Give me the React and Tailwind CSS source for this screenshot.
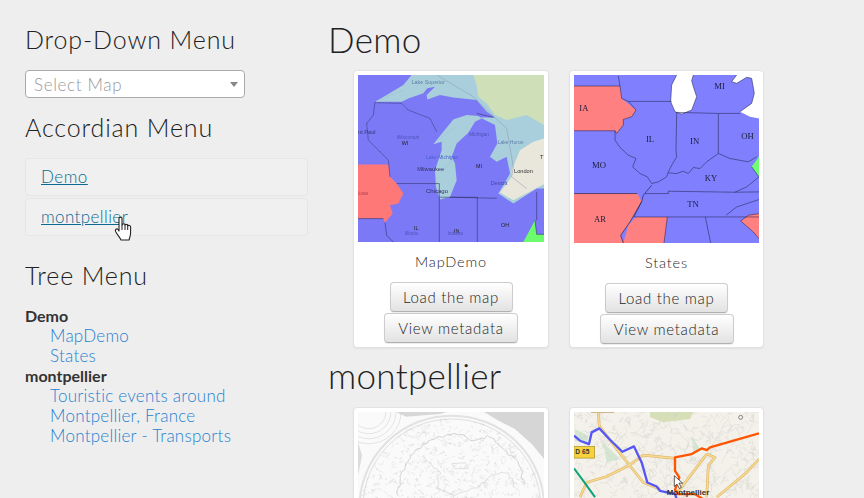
const rnd = (seed) => { let s = seed; return () => (s = (s * 16807) % 2147483647) / 2147483647; };

const roadNet = (() => {
  const r = rnd(77); let d = "";
  for (let i = 0; i < 340; i++) {
    let x = 42 + r() * 555, y = 39 + r() * 260;
    d += `M${x.toFixed(0)} ${y.toFixed(0)}`;
    for (let k = 0; k < 3; k++) { x += (r() - 0.5) * 36; y += (r() - 0.5) * 36; d += `L${x.toFixed(0)} ${y.toFixed(0)}`; }
  }
  return d;
})();

const worldLines = (() => {
  const r = rnd(31); let d = "";
  for (let i = 0; i < 1100; i++) {
    const a = r() * Math.PI * 2, q = Math.sqrt(r()) * 262;
    let x = 335 + Math.cos(a) * q, y = 283 + Math.sin(a) * q;
    d += `M${x.toFixed(0)} ${y.toFixed(0)}`;
    for (let k = 0; k < 3; k++) { x += (r() - 0.5) * 14; y += (r() - 0.5) * 12; d += `L${x.toFixed(0)} ${y.toFixed(0)}`; }
  }
  return d;
})();

const jitter = (pts, seed) => {
  const r = rnd(seed); let d = "";
  pts.forEach(([x, y], i) => {
    if (i === 0) { d += `M${x} ${y}`; return; }
    const [px, py] = pts[i - 1];
    for (let t = 1; t <= 6; t++) {
      const f = t / 6;
      d += `L${(px + (x - px) * f + (r() - 0.5) * 9).toFixed(0)} ${(py + (y - py) * f + (r() - 0.5) * 9).toFixed(0)}`;
    }
  });
  return d;
};
const eurasia = jitter([[175, 250], [185, 190], [215, 130], [270, 85], [340, 62], [400, 85], [440, 72], [490, 110], [530, 150], [548, 215]], 11);
const inner = jitter([[250, 135], [300, 180], [290, 230], [340, 250], [420, 220], [450, 190], [500, 180], [525, 225]], 23);

function MapOne() {
  const lab = { fontFamily: "'Liberation Sans', sans-serif" };
  return (
    <svg viewBox="54 45 558 500" preserveAspectRatio="none" className="block h-full w-full">
      <g style={{ filter: "blur(0.45px)" }}>
        <rect x="54" y="45" width="558" height="500" fill="#7c79f6" />
        <path d="M215 45 L612 45 L612 385 L590 385 L520 430 L475 400 L490 375 L510 340 L500 290 L470 305 L450 290 L472 250 L465 195 L420 172 L465 172 L440 155 L410 120 L340 112 L300 105 L262 118 L260 105 L285 80 L262 85 L250 100 L205 115 L185 125 L105 125 L140 105 L190 75 Z" fill="#a9cfdc" />
        <path d="M340 178 L380 165 L415 168 L425 175 L405 185 L385 218 L350 250 L335 290 L345 310 L350 360 L330 410 L300 418 L288 380 L285 330 L295 300 L305 270 L305 245 L280 252 L310 215 Z" fill="#a9cfdc" />
        <path d="M400 45 L612 45 L612 195 L560 165 L500 180 L465 165 L440 130 L415 110 L410 75 Z" fill="#cfdfb8" />
        <path d="M515 330 L540 270 L580 245 L612 235 L612 372 L520 420 L480 397 L515 350 Z" fill="#e9e6dc" />
        <path d="M54 313 L145 313 L150 350 L170 370 L190 400 L175 430 L150 435 L158 460 L135 487 L130 475 L54 475 Z" fill="#ff7878" />
        <path d="M550 545 L585 480 L590 522 L612 522 L612 545 Z" fill="#6cfb6c" />
        <g fill="none" stroke="#2a2a5a" strokeWidth="1.6">
          <path d="M54 475 L130 475 M170 370 L298 370 L298 545 M298 411 L412 411 L412 545 M330 411 L470 414 M585 480 L590 522 L612 522 M590 395 L590 480" />
          <path d="M135 487 L140 525 L160 545" />
          <path d="M105 125 L110 128 L185 130 L205 150 L270 175 L290 215" strokeDasharray="4 1" />
          <path d="M80 190 L100 165 L105 125 M80 190 L85 240 L115 270 L145 300 L150 350" strokeDasharray="5 1" />
          <path d="M410 160 L460 172" />
        </g>
        <path d="M290 45 L400 110 L440 150 L500 205 L520 320 L515 350 L560 385" fill="none" stroke="#8f9bb0" strokeWidth="1.6" />
        <path d="M190 90 L105 125 M300 235 L350 200 M340 300 L300 340" fill="none" stroke="#97b8cb" strokeWidth="1.2" />
        <g style={lab} fontSize="17">
          <text x="215" y="71" fill="#5f7fa6" fontSize="16">Lake Superior</text>
          <text x="54" y="223" fill="#333a78">nt Paul</text>
          <text x="170" y="237" fill="#4c52b8" fontSize="15" fontStyle="italic">Wisconsin</text>
          <text x="185" y="254" fill="#222" fontSize="16">WI</text>
          <text x="387" y="229" fill="#4c52b8" fontSize="15">Michigan</text>
          <text x="473" y="253" fill="#5f7fa6" fontSize="15">Lake Huron</text>
          <text x="258" y="298" fill="#4a5fd0" fontSize="15">Lake Michigan</text>
          <text x="232" y="332" fill="#2f3060">Milwaukee</text>
          <text x="408" y="322" fill="#222" fontSize="16">MI</text>
          <text x="522" y="337" fill="#333">London</text>
          <text x="600" y="298" fill="#333">T</text>
          <text x="452" y="373" fill="#4348a8">Detroit</text>
          <text x="258" y="397" fill="#2f3060" fontSize="18">Chicago</text>
          <text x="54" y="405" fill="#b04050" fontSize="14">Iowa</text>
          <text x="222" y="510" fill="#222" fontSize="16">IL</text>
          <text x="195" y="525" fill="#4c52b8" fontSize="14">Illinois</text>
          <text x="342" y="519" fill="#222" fontSize="16">IN</text>
          <text x="323" y="525" fill="#4c52b8" fontSize="14">Indiana</text>
          <text x="483" y="499" fill="#222" fontSize="16">OH</text>
        </g>
      </g>
    </svg>
  );
}

function MapTwo() {
  const lab = { fontFamily: "'Liberation Serif', serif" };
  return (
    <svg viewBox="42 45 555 503" preserveAspectRatio="none" className="block h-full w-full">
      <g style={{ filter: "blur(0.3px)" }}>
        <rect x="42" y="45" width="555" height="503" fill="#8080ff" />
        <path d="M350 45 L335 75 L332 125 L345 155 L365 162 L395 150 L410 110 L400 80 L395 62 L400 45 Z" fill="#fff" />
        <path d="M530 45 L515 65 L530 70 L560 52 L575 55 L583 100 L575 130 L540 155 L570 170 L597 175 L597 45 Z" fill="#fff" />
        <path d="M42 78 L180 78 L185 115 L228 150 L215 170 L190 178 L190 195 L170 220 L165 212 L42 212 Z" fill="#ff8080" />
        <path d="M42 400 L232 400 L245 424 L230 450 L210 485 L182 525 L190 548 L42 548 Z" fill="#ff8080" />
        <path d="M228 470 L322 470 L312 548 L190 548 L205 495 Z" fill="#ff8080" />
        <path d="M597 290 L575 320 L597 350 Z" fill="#70ff70" />
        <path d="M597 460 L565 465 L542 482 L580 515 L597 535 Z" fill="#ff8080" />
        <g fill="none" stroke="#20204a" strokeWidth="1.6" strokeLinejoin="round">
          <path d="M42 78 L180 78 L175 48 M180 78 L185 115 L205 124 L228 150 L215 170 L190 178 L190 195 L170 220 L165 212 L42 212" />
          <path d="M205 124 L335 124 M350 157 L348 270 L350 290 L338 310 L325 335 L320 350 L295 365 L275 370 L262 350 L240 340 L218 320 L228 295 L205 285 L180 262 L165 240 L165 212" />
          <path d="M350 157 L475 160 L475 280 L440 305 L420 325 L400 322 L385 340 L370 333 L350 340 L325 338" />
          <path d="M475 160 L540 160 M475 280 L510 295 L565 305 L590 290 M575 320 L597 350 L560 380 L525 396" />
          <path d="M42 400 L232 400 M275 375 L250 405 L245 424 L230 450 L210 485 L182 525 L190 548" strokeWidth="2" />
          <path d="M255 400 L325 400 L325 393 L525 396 L597 395" />
          <path d="M245 424 L222 470 L597 470 M597 418 L530 440 L498 465" />
          <path d="M322 470 L312 548 M436 470 L452 548" />
          <path d="M597 460 L565 465 L542 482 L580 515 L597 535" />
          <path d="M350 45 L335 75 L332 125 L345 155 L365 162 L395 150 L410 110 L400 80 L395 62 L400 45" />
          <path d="M530 45 L515 65 L530 70 L560 52 L575 55 L583 100 L575 130 L540 155" />
        </g>
        <g style={lab} fontSize="26" fill="#1a1a3a">
          <text x="463" y="88">MI</text>
          <text x="58" y="152">IA</text>
          <text x="258" y="245">IL</text>
          <text x="390" y="252">IN</text>
          <text x="544" y="236">OH</text>
          <text x="96" y="324">MO</text>
          <text x="434" y="362">KY</text>
          <text x="382" y="440">TN</text>
          <text x="102" y="484">AR</text>
        </g>
      </g>
    </svg>
  );
}

function MapWorld() {
  return (
    <svg viewBox="58 0 549 500" preserveAspectRatio="none" className="block h-full w-full">
      <rect x="58" y="0" width="549" height="500" fill="#fafafa" />
      <g fill="none" stroke="#c4c4c4" strokeWidth="1.2">
        <circle cx="90" cy="0" r="50" />
        <circle cx="90" cy="0" r="65" />
        <circle cx="90" cy="0" r="80" />
        <circle cx="90" cy="0" r="95" />
        <path d={worldLines} opacity="0.7" strokeWidth="1" />
        <circle cx="335" cy="283" r="272" strokeWidth="6" stroke="#e2e2e2" />
        <circle cx="335" cy="283" r="262" strokeWidth="1.5" />
        <path d={eurasia} strokeWidth="1.5" stroke="#b0b0b0" />
        <path d={inner} strokeWidth="1.2" stroke="#bbb" />
        <path d="M335 155 L345 170 L385 168 L375 152 Z" strokeWidth="1.2" stroke="#bbb" />
      </g>
      <path d="M430 0 L607 0 L607 140 L570 95 L520 50 L470 25 Z" fill="#c9c9c9" opacity="0.75" />
      <path d="M170 0 L320 0 L300 6 L200 14 Z" fill="#c8c8c8" opacity="0.7" />
      <path d="M58 90 L70 130 L58 190 Z" fill="#c8c8c8" opacity="0.6" />
    </svg>
  );
}

function MapCity() {
  const roads = "M60 294 L80 250 L140 232 L205 200 L250 168 L345 178 M115 42 L118 80 L170 150 L250 250 L300 270 M440 165 L465 175 L445 200 L440 294 M470 294 L560 220 L597 180 M345 290 L440 165";
  return (
    <svg viewBox="42 39 555 500" preserveAspectRatio="none" className="block h-full w-full">
      <rect x="42" y="39" width="555" height="500" fill="#f3f1e9" />
      <path d="M270 39 L400 39 L390 60 L310 70 L270 55 Z" fill="#d6dfb8" />
      <path d="M45 90 L85 110 L80 135 L45 125 Z M130 130 L180 180 L140 190 Z M395 110 L420 150 L400 160 Z" fill="#d4e6d2" />
      <path d="M90 39 L165 39 L160 42 L95 42 Z" fill="#c9b78a" />
      <path d={roadNet} fill="none" stroke="#cfcfca" strokeWidth="1" />
      <path d={roads} fill="none" stroke="#d8b468" strokeWidth="8" strokeLinejoin="round" />
      <path d={roads} fill="none" stroke="#f8d78f" strokeWidth="5" strokeLinejoin="round" />
      <path d="M42 208 L70 245 L105 294" fill="none" stroke="#10a27a" strokeWidth="6" />
      <path d="M42 110 L60 125 L87 135 L95 100 L118 88 L150 122 L187 158 L222 142 L245 190 L262 250 L290 262 L300 275 L345 285 L350 300" fill="none" stroke="#5656f6" strokeWidth="7" strokeLinejoin="round" />
      <path d="M597 103 L450 145 L440 153 L425 148 L395 165 L345 175 L345 215 L358 235 L345 272 L355 285 L405 285 L430 300" fill="none" stroke="#ff5500" strokeWidth="7" strokeLinejoin="round" />
      <rect x="42" y="142" width="62" height="35" fill="#f7d23c" stroke="#a39028" strokeWidth="2" />
      <text x="46" y="166" fontSize="20" fontWeight="700" fill="#333" fontFamily="'Liberation Sans', sans-serif">D 65</text>
      <circle cx="542" cy="55" r="6" fill="#eee" stroke="#555" strokeWidth="2" />
      <text x="320" y="288" fontSize="24" fontWeight="700" fill="#333" fontFamily="'Liberation Sans', sans-serif">Montpellier</text>
      <path d="M343 230 L343 262 L351 255 L358 268 L364 265 L357 252 L368 252 Z" fill="#fff" stroke="#111" strokeWidth="2" />
    </svg>
  );
}

function Btn({ children }) {
  return (
    <button className="block h-[30px] w-full rounded-[4px] border border-[#ccc] border-b-[#b0b0b0] bg-gradient-to-b from-white to-[#e2e2e2] text-center text-[15px] font-light leading-[26px] tracking-[0.7px] text-[#1f1f1f] shadow-[0_1px_1px_rgba(0,0,0,0.08)]">
      {children}
    </button>
  );
}

function MapCard({ wide, tall, title, map, actions }) {
  return (
    <div className={`flex flex-col items-center rounded-[4px] border border-[#e2e2e2] bg-white p-[4px] shadow-[0_1px_2px_rgba(0,0,0,0.06)] ${wide ? "w-[196px]" : "w-[195px]"} ${actions ? "h-[278px]" : ""}`}>
      <div className={`shrink-0 overflow-hidden ${wide ? "w-[186px]" : "w-[185px]"} ${tall ? "h-[168px]" : "h-[167px]"}`}>{map}</div>
      {actions && (
        <div className="flex flex-col items-center">
          <p className="mt-[10px] h-[20px] text-[14.5px] font-light leading-[20px] tracking-[0.85px] text-[#1f1f1f]">{title}</p>
          <div className="mt-[10px] flex flex-col items-center gap-[1px]">
            <div className="w-[123px]"><Btn>Load the map</Btn></div>
            <div className="w-[134px]"><Btn>View metadata</Btn></div>
          </div>
        </div>
      )}
    </div>
  );
}

const H3 = ({ children, className }) => (
  <h3 className={`text-[25px] font-light leading-[30px] tracking-[0.85px] text-[#222] ${className}`}>{children}</h3>
);
const H2 = ({ children, className }) => (
  <h2 className={`text-[35px] font-light leading-[40px] tracking-[0.3px] text-[#222] ${className}`}>{children}</h2>
);

function HandCursor() {
  return (
    <svg viewBox="0 0 20 25" className="absolute left-[88px] top-[17px] h-[25px] w-[20px]">
      <path d="M5 2.2 C5 .8 8 .8 8 2.2 L8 9 L8.4 8.5 C9 7.5 11 7.5 11 9 C11.6 8 13.7 8.3 13.7 9.8 C14.5 9 16.6 9.3 16.6 11 L16.6 17 C16.6 20 15.5 22 15 24 L7 24 C6 21.5 3.5 19 1.6 15.5 C0.6 13.5 2.8 12 4 13.5 L5 15 Z" fill="#fff" stroke="#222" strokeWidth="1.1" strokeLinejoin="round" />
      <path d="M8 9 L8 14 M11 9 L11 14 M13.7 10 L13.7 14" stroke="#222" strokeWidth="1" />
    </svg>
  );
}

export default function App() {
  const tree = [
    ["Demo", ["MapDemo", "States"]],
    ["montpellier", ["Touristic events around", "Montpellier, France", "Montpellier - Transports"]],
  ];
  return (
    <div className="flex h-[498px] w-[864px] items-start overflow-hidden bg-[#eeeeee] pl-[25px] font-['Lato','Open_Sans',sans-serif] text-[#333]">
      <aside className="flex w-[283px] shrink-0 flex-col pt-[24px]">
        <H3>Drop-Down Menu</H3>
        <div className="mt-[16px] flex h-[28px] w-[220px] items-center justify-between rounded-[4px] border border-[#aaa] bg-white pl-[8px] pr-[6px]">
          <span className="translate-y-px text-[17px] font-light tracking-[0.65px] text-[#999]">Select Map</span>
          <span className="h-0 w-0 border-x-[4px] border-t-[5px] border-x-transparent border-t-[#888]" />
        </div>
        <H3 className="mt-[14px]">Accordian Menu</H3>
        <div className="mt-[16px] flex h-[38px] items-center rounded-[4px] border border-[#e6e6e6] bg-[#f0f0f0] pl-[15px]">
          <a href="#" className="text-[17px] font-light tracking-[0.5px] text-[#0a6a94] underline">Demo</a>
        </div>
        <div className="relative mt-[2px] flex h-[38px] items-center rounded-[4px] border border-[#e6e6e6] bg-[#f0f0f0] pl-[15px]">
          <a href="#" className="text-[17px] font-light tracking-[0.4px] text-[#0a6a94] underline">montpellier</a>
          <HandCursor />
        </div>
        <H3 className="mt-[24px]">Tree Menu</H3>
        <div className="mt-[16px] text-[16px] leading-[20px]">
          {tree.map(([g, items]) => (
            <div key={g}>
              <div className="font-bold text-[#333]">{g}</div>
              {items.map((i) => (
                <a key={i} href="#" className="block pl-[25px] text-[17px] font-light tracking-[0.25px] text-[#1f82d0]">{i}</a>
              ))}
            </div>
          ))}
        </div>
      </aside>
      <main className="ml-[21px] flex flex-col pt-[19px]">
        <H2 className="-ml-px">Demo</H2>
        <div className="ml-[24px] mt-[11px] flex items-start gap-[20px]">
          <MapCard wide title="MapDemo" map={<MapOne />} actions />
          <MapCard tall title="States" map={<MapTwo />} actions />
        </div>
        <H2 className="-ml-px mt-[7px]">montpellier</H2>
        <div className="ml-[24px] mt-[12px] flex items-start gap-[20px]">
          <MapCard wide map={<MapWorld />} />
          <MapCard map={<MapCity />} />
        </div>
      </main>
    </div>
  );
}
